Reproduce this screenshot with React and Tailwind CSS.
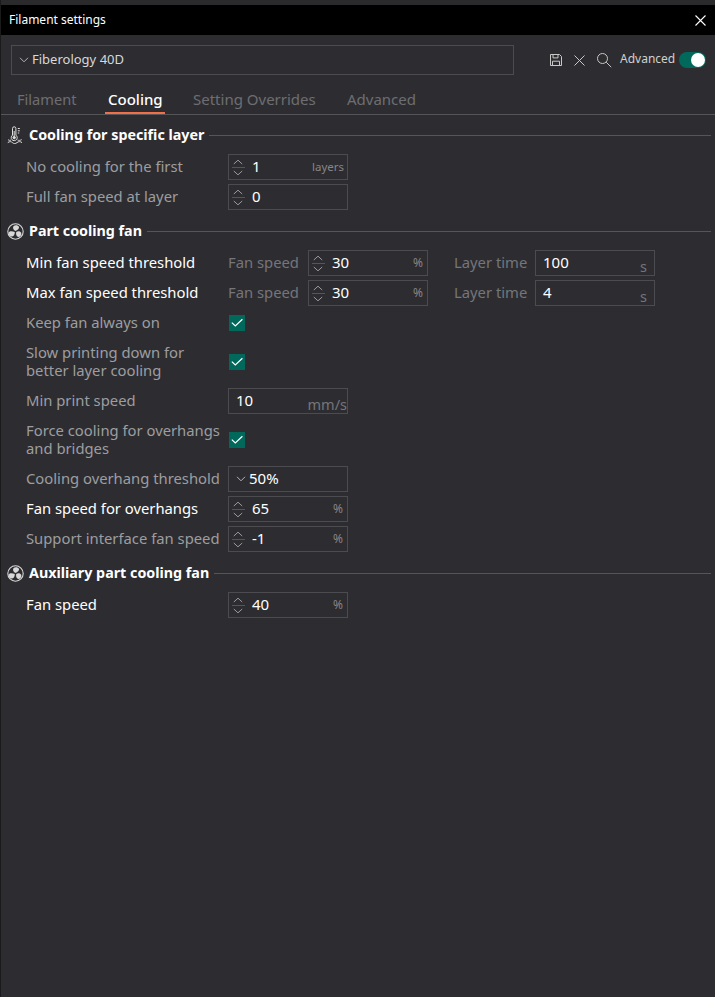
import React from "react";

const font = { fontFamily: '"Noto Sans", sans-serif' };

const Chev = ({ up, className = "" }) => (
  <svg width="10" height="6" viewBox="0 0 10 6" className={className} fill="none" stroke="#a8a8aa" strokeWidth="0.9">
    <path d={up ? "M.8 5 5 1.2 9.2 5" : "M.8 1 5 4.8 9.2 1"} />
  </svg>
);

const Spin = () => (
  <div className="w-[14px] ml-[2px] shrink-0 flex flex-col items-center">
    <Chev up />
    <div className="w-[13px] h-px bg-[#55555a] my-[2px]" />
    <Chev />
  </div>
);

const Field = ({ value, unit, spin, unitClass = "text-[12px] text-[#85858a] pr-[4px]", big }) => (
  <div className="w-[120px] h-[26px] border border-[#4b4b50] flex items-center shrink-0 relative">
    {spin ? <Spin /> : null}
    <span className="text-[15px] text-white leading-none ml-[7px] pb-[2px]">{value}</span>
    {unit ? (
      <span className={`absolute ${big ? "right-0 bottom-0 text-[14.5px] text-[#75757a] leading-[18px]" : "right-0 " + unitClass}`}>{unit}</span>
    ) : null}
  </div>
);

const Check = () => (
  <div className="w-4 h-4 bg-[#00695c] flex items-center justify-center ml-[1px]">
    <svg width="12" height="10" viewBox="0 0 12 10" fill="none" stroke="#fff" strokeWidth="1.2">
      <path d="M.8 4.6 4.3 8 11.4 1.2" />
    </svg>
  </div>
);

const Thermo = () => (
  <svg width="16" height="18" viewBox="0 0 16 18" fill="none" stroke="#e0e0e0" strokeWidth="1">
    <path d="M5.5 2.5a1.7 1.7 0 0 1 3.4 0v6.7a3 3 0 1 1-3.4 0z" />
    <circle cx="7.2" cy="11.6" r="1.2" fill="#e0e0e0" />
    <path d="M7.2 5v5M10.8 2.5h2M10.8 4.8h2M10.8 7h1.4" />
    <path d="M1 13.6c1.2 1 2 1 3 .4M10.6 14c1 .6 2.6.6 4-.4M.8 16.6c2-1.3 3.2-1.3 4.6 0s3 1.3 4.6 0 3.2-1.3 5 0" />
  </svg>
);

const Fan = () => (
  <svg width="17" height="17" viewBox="0 0 17 17" fill="none">
    <circle cx="8.5" cy="8.5" r="7.7" stroke="#d8d8d8" strokeWidth="1.1" />
    <path d="M8.4 8C6.1 6.8 5.5 4.4 6.6 2.9c1.5-1.2 4.9-.8 5.4 1.1.3 1.7-1.4 3.2-3.6 4z" fill="#d8d8d8" />
    <path d="M9.2 8.9c2-1 4.2-.7 5.1 1 .5 1.9-1 4.1-3.1 4-1.8-.4-2.4-2.7-2-5z" fill="#d8d8d8" />
    <path d="M7.8 9c.1 2.4-1.2 4.5-3.1 4.5-2-.1-3.4-2.3-2.9-4.1.7-1.7 3.6-1.5 6-.4z" fill="#d8d8d8" />
  </svg>
);

const Header = ({ icon, title }) => (
  <div className="h-9 pt-[2px] flex items-center">
    <div className="w-[18px] ml-[5px] flex justify-center shrink-0">{icon}</div>
    <span className="ml-[5px] text-[14.3px] font-bold text-white whitespace-nowrap">{title}</span>
    <div className="flex-1 h-px bg-[#55555a] ml-[5px] mr-[4px]" />
  </div>
);

const Row = ({ label, bright, tall, children }) => (
  <div className={`${tall ? "h-12" : "h-[30px]"} flex items-center pl-[25px]`}>
    <div className={`w-[202px] shrink-0 pb-[2px] text-[14.8px] leading-[18px] whitespace-pre-line ${bright ? "text-white" : "text-[#9d9da0]"}`}>{label}</div>
    {children}
  </div>
);

const Sub = ({ children, className = "" }) => (
  <span className={`text-[14.8px] pb-[2px] text-[#75757a] whitespace-nowrap ${className}`}>{children}</span>
);

export default function App() {
  return (
    <div className="w-[715px] h-[997px] bg-[#2d2d31] flex flex-col overflow-hidden border-l border-[#1a1a1a]" style={font}>
      <div className="h-[5px] bg-[#2a2a2d] shrink-0" />
      <div className="h-[30px] bg-black flex items-center justify-between pl-[8px] pr-[9px] shrink-0">
        <span className="text-[12px] text-white">Filament settings</span>
        <svg width="11" height="11" viewBox="0 0 11 11" stroke="#fff" strokeWidth="1.1">
          <path d="M.5.5l10 10M10.5.5l-10 10" />
        </svg>
      </div>

      <div className="h-[40px] flex items-end shrink-0">
        <div className="ml-[10px] w-[503px] h-[30px] border border-[#4b4b50] flex items-center">
          <svg width="10" height="6" viewBox="0 0 10 6" fill="none" stroke="#b4b4b6" strokeWidth="1" className="ml-[7px]">
            <path d="M1 .8 5 4.8 9 .8" />
          </svg>
          <span className="ml-[3px] text-[13px] text-[#d8d8da]">Fiberology 40D</span>
        </div>
        <div className="flex items-center h-[30px] ml-[35px]">
          <svg width="14" height="14" viewBox="0 0 14 14" fill="none" stroke="#c8c8c8" strokeWidth="1">
            <path d="M1.5 1.5h9l2 2v9h-11zM4 1.5v3.4h5V1.5M3.5 12.5V8.2h7v4.3" />
          </svg>
          <svg width="11" height="11" viewBox="0 0 11 11" stroke="#c8c8c8" strokeWidth="1" className="ml-[11px]">
            <path d="M.5.5l10 10M10.5.5l-10 10" />
          </svg>
          <svg width="16" height="16" viewBox="0 0 16 16" fill="none" stroke="#c8c8c8" strokeWidth="1" className="ml-[11px]">
            <circle cx="6.5" cy="6.5" r="5" />
            <path d="M10.2 10.2l5 5" />
          </svg>
          <span className="ml-[8px] text-[12px] text-[#d0d0d0] leading-none -mt-[3px]">Advanced</span>
          <div className="ml-[4px] w-[27px] h-[16px] rounded-full bg-[#00695c] flex items-center justify-end pr-px -mt-px">
            <div className="w-[14px] h-[14px] rounded-full bg-white" />
          </div>
        </div>
      </div>

      <div className="h-[40px] border-b border-[#55555a] flex items-end pl-[16px] shrink-0 text-[15px] text-[#6e6e72]">
        <div className="h-[29px] leading-[28px] w-[91px] text-[14.6px]">Filament</div>
        <div className="h-[29px] leading-[28px] w-[54px] mr-[31px] relative text-white font-medium whitespace-nowrap">
          Cooling
          <div className="absolute left-[-3px] right-[-3px] bottom-0 h-[2px] bg-[#f0704a]" />
        </div>
        <div className="h-[29px] leading-[28px] w-[154px]">Setting Overrides</div>
        <div className="h-[29px] leading-[28px]">Advanced</div>
      </div>

      <div className="pt-px flex flex-col">
        <Header icon={<Thermo />} title="Cooling for specific layer" />
        <Row label="No cooling for the first">
          <Field spin value="1" unit="layers" unitClass="text-[11.5px] text-[#85858a] pr-[3px]" />
        </Row>
        <Row label="Full fan speed at layer">
          <Field spin value="0" />
        </Row>

        <Header icon={<Fan />} title="Part cooling fan" />
        <Row label="Min fan speed threshold" bright>
          <Sub className="w-[80px]">Fan speed</Sub>
          <Field spin value="30" unit="%" />
          <Sub className="ml-[26px] w-[81px]">Layer time</Sub>
          <Field value="100" unit="s" unitClass="bottom-0 text-[14.5px] text-[#75757a] pr-[7px] leading-[18px]" />
        </Row>
        <Row label="Max fan speed threshold" bright>
          <Sub className="w-[80px]">Fan speed</Sub>
          <Field spin value="30" unit="%" />
          <Sub className="ml-[26px] w-[81px]">Layer time</Sub>
          <Field value="4" unit="s" unitClass="bottom-0 text-[14.5px] text-[#75757a] pr-[7px] leading-[18px]" />
        </Row>
        <Row label="Keep fan always on"><Check /></Row>
        <Row tall label={"Slow printing down for\nbetter layer cooling"}><Check /></Row>
        <Row label="Min print speed"><Field value="10" unit="mm/s" big /></Row>
        <Row tall label={"Force cooling for overhangs\nand bridges"}><Check /></Row>
        <Row label="Cooling overhang threshold">
          <div className="w-[120px] h-[26px] border border-[#4b4b50] flex items-center shrink-0">
            <svg width="10" height="6" viewBox="0 0 10 6" fill="none" stroke="#b4b4b6" strokeWidth="1" className="ml-[7px]">
              <path d="M1 .8 5 4.8 9 .8" />
            </svg>
            <span className="ml-[3px] pb-[2px] text-[15px] text-white">50%</span>
          </div>
        </Row>
        <Row label="Fan speed for overhangs" bright>
          <Field spin value="65" unit="%" />
        </Row>
        <Row label="Support interface fan speed">
          <Field spin value="-1" unit="%" />
        </Row>

        <Header icon={<Fan />} title="Auxiliary part cooling fan" />
        <Row label="Fan speed" bright>
          <Field spin value="40" unit="%" />
        </Row>
      </div>
    </div>
  );
}
